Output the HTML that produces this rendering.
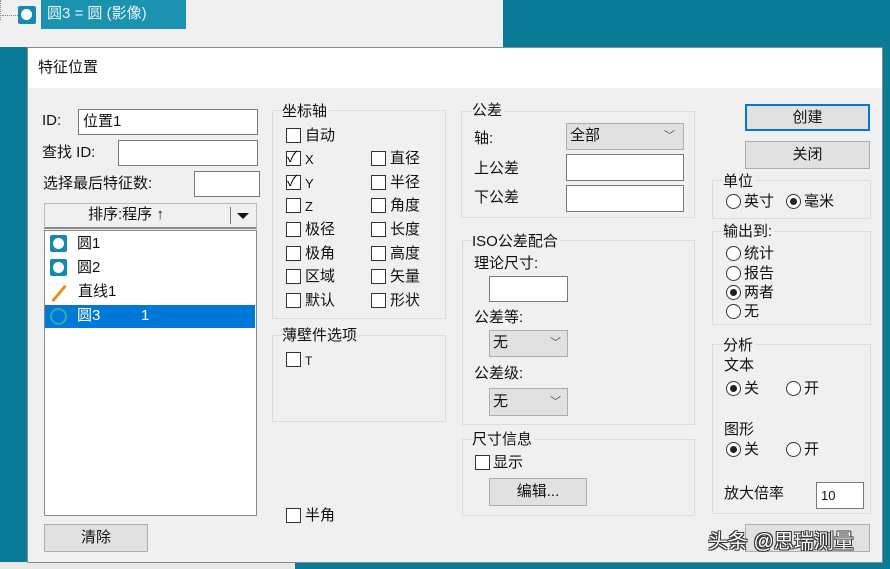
<!DOCTYPE html>
<html><head><meta charset="utf-8"><style>
*{margin:0;padding:0;box-sizing:border-box}
body{width:890px;height:569px;overflow:hidden;position:relative;background:#0a7b97;font-family:"Liberation Sans","Noto Sans CJK SC",sans-serif;font-size:15px;color:#111}
.a{position:absolute}
.t{position:absolute;line-height:18px;white-space:nowrap}
.in{position:absolute;background:#fff;border:1px solid #7a7a7a}
.grp{position:absolute;border:1px solid #dcdcdc}
.gl{position:absolute;background:#f0f0f0;line-height:18px;padding-right:2px;white-space:nowrap}
.cb{position:absolute;width:15px;height:15px;border:1px solid #333;background:#fff}
.rb{position:absolute;width:15px;height:15px;border:1px solid #333;border-radius:50%;background:#fff}
.rb.on::after{content:"";position:absolute;left:3px;top:3px;width:7px;height:7px;border-radius:50%;background:#222}
.btn{position:absolute;background:#e1e1e1;border:1px solid #adadad;text-align:center}
.sel{position:absolute;background:#e1e1e1;border:1px solid #adadad}
.ic{position:absolute;width:17px;height:17px;background:#1689b3;border-radius:2px}
.ic::after{content:"";position:absolute;left:3px;top:3px;width:11px;height:11px;border-radius:50%;background:#fff}
</style></head><body>
<div class="a" style="left:0;top:0;width:503px;height:47px;background:#f0f0f0"></div>
<div class="a" style="left:0;top:0;width:2px;height:20px;border-left:1px dotted #888"></div>
<div class="a" style="left:2px;top:15px;width:16px;border-top:1px dotted #888"></div>
<div class="ic" style="left:18px;top:6px;width:18px;height:18px"></div>
<div class="a" style="left:41px;top:0;width:145px;height:29px;background:#1a92b0"></div>
<div class="t" style="left:47px;top:5px;color:#e8f6fb;font-size:15px">圆3 = 圆 (影像)</div>
<div class="a" style="left:0;top:562px;width:295px;height:7px;background:#e8e8e8"></div>

<div class="a" style="left:27px;top:47px;width:856px;height:516px;background:#f0f0f0;border:1px solid #8a8a8a"></div>
<div class="a" style="left:28px;top:48px;width:854px;height:40px;background:#fff"></div>
<div class="t" style="left:38px;top:59px">特征位置</div>

<div class="t" style="left:42px;top:112px">ID:</div>
<div class="in" style="left:78px;top:109px;width:180px;height:26px"></div>
<div class="t" style="left:83px;top:113px">位置1</div>
<div class="t" style="left:42px;top:144px">查找 ID:</div>
<div class="in" style="left:118px;top:140px;width:140px;height:26px"></div>
<div class="t" style="left:43px;top:175px">选择最后特征数:</div>
<div class="in" style="left:194px;top:171px;width:66px;height:26px"></div>

<div class="a" style="left:44px;top:203px;width:213px;height:26px;background:#f0f0f0;border:1px solid #bbb;border-bottom:2px solid #888"></div>
<div class="t" style="left:88px;top:206px">排序:程序 ↑</div>
<div class="a" style="left:230px;top:207px;width:1px;height:17px;background:#777"></div>
<div class="a" style="left:237px;top:213px;border-left:6px solid transparent;border-right:6px solid transparent;border-top:6px solid #111"></div>
<div class="in" style="left:44px;top:230px;width:213px;height:286px;border-color:#888"></div>
<div class="ic" style="left:50px;top:235px"></div><div class="t" style="left:77px;top:235px">圆1</div>
<div class="ic" style="left:50px;top:259px"></div><div class="t" style="left:77px;top:259px">圆2</div>
<div class="a" style="left:49px;top:292px;width:20px;height:3px;background:#e8901a;transform:rotate(-50deg)"></div><div class="t" style="left:78px;top:283px">直线1</div>
<div class="a" style="left:45px;top:305px;width:210px;height:23px;background:#0078d7"></div>
<div class="a" style="left:50px;top:308px;width:17px;height:17px;border:2px solid #3aa;border-radius:50%"></div>
<div class="t" style="left:77px;top:307px;color:#fff">圆3</div><div class="t" style="left:141px;top:307px;color:#fff">1</div>
<div class="btn" style="left:44px;top:524px;width:104px;height:28px;line-height:26px">清除</div>

<div class="grp" style="left:272px;top:110px;width:174px;height:209px"></div>
<div class="gl" style="left:282px;top:103px">坐标轴</div>
<div class="cb" style="left:286px;top:128px"></div><div class="t" style="left:305px;top:127px">自动</div>
<div class="cb" style="left:286px;top:151px"></div><div class="t" style="left:305px;top:151px;font-size:13px">X</div>
<div class="cb" style="left:286px;top:175px"></div><div class="t" style="left:305px;top:175px;font-size:13px">Y</div>
<div class="t" style="left:287px;top:149px;font-size:15px">✓</div><div class="t" style="left:287px;top:173px;font-size:15px">✓</div>
<div class="cb" style="left:286px;top:198px"></div><div class="t" style="left:305px;top:198px;font-size:13px">Z</div>
<div class="cb" style="left:286px;top:222px"></div><div class="t" style="left:305px;top:221px">极径</div>
<div class="cb" style="left:286px;top:246px"></div><div class="t" style="left:305px;top:245px">极角</div>
<div class="cb" style="left:286px;top:269px"></div><div class="t" style="left:305px;top:268px">区域</div>
<div class="cb" style="left:286px;top:293px"></div><div class="t" style="left:305px;top:292px">默认</div>
<div class="cb" style="left:371px;top:151px"></div><div class="t" style="left:390px;top:150px">直径</div>
<div class="cb" style="left:371px;top:175px"></div><div class="t" style="left:390px;top:174px">半径</div>
<div class="cb" style="left:371px;top:198px"></div><div class="t" style="left:390px;top:197px">角度</div>
<div class="cb" style="left:371px;top:222px"></div><div class="t" style="left:390px;top:221px">长度</div>
<div class="cb" style="left:371px;top:246px"></div><div class="t" style="left:390px;top:245px">高度</div>
<div class="cb" style="left:371px;top:269px"></div><div class="t" style="left:390px;top:268px">矢量</div>
<div class="cb" style="left:371px;top:293px"></div><div class="t" style="left:390px;top:292px">形状</div>

<div class="grp" style="left:272px;top:335px;width:174px;height:87px"></div>
<div class="gl" style="left:282px;top:327px">薄壁件选项</div>
<div class="cb" style="left:286px;top:352px"></div><div class="t" style="left:305px;top:352px;font-size:12px">T</div>
<div class="cb" style="left:286px;top:508px"></div><div class="t" style="left:305px;top:507px">半角</div>

<div class="grp" style="left:461px;top:111px;width:234px;height:107px"></div>
<div class="gl" style="left:472px;top:102px">公差</div>
<div class="t" style="left:474px;top:130px">轴:</div>
<div class="sel" style="left:566px;top:123px;width:118px;height:27px"></div>
<div class="t" style="left:570px;top:127px">全部</div><div class="t" style="left:664px;top:127px;font-size:11px;color:#555">﹀</div>
<div class="t" style="left:474px;top:160px">上公差</div>
<div class="in" style="left:566px;top:154px;width:118px;height:27px"></div>
<div class="t" style="left:474px;top:189px">下公差</div>
<div class="in" style="left:566px;top:185px;width:118px;height:27px"></div>

<div class="grp" style="left:462px;top:240px;width:233px;height:185px"></div>
<div class="gl" style="left:472px;top:233px">ISO公差配合</div>
<div class="t" style="left:474px;top:255px">理论尺寸:</div>
<div class="in" style="left:489px;top:276px;width:79px;height:26px"></div>
<div class="t" style="left:474px;top:309px">公差等:</div>
<div class="sel" style="left:489px;top:330px;width:79px;height:27px"></div><div class="t" style="left:493px;top:334px">无</div><div class="t" style="left:550px;top:334px;font-size:11px;color:#555">﹀</div>
<div class="t" style="left:474px;top:365px">公差级:</div>
<div class="sel" style="left:489px;top:388px;width:79px;height:28px"></div><div class="t" style="left:493px;top:393px">无</div><div class="t" style="left:550px;top:393px;font-size:11px;color:#555">﹀</div>

<div class="grp" style="left:462px;top:439px;width:233px;height:77px"></div>
<div class="gl" style="left:472px;top:431px">尺寸信息</div>
<div class="cb" style="left:475px;top:455px"></div><div class="t" style="left:493px;top:454px">显示</div>
<div class="btn" style="left:489px;top:478px;width:98px;height:28px;line-height:26px">编辑...</div>

<div class="btn" style="left:745px;top:104px;width:125px;height:27px;line-height:23px;border:2px solid #0078d7">创建</div>
<div class="btn" style="left:745px;top:141px;width:125px;height:28px;line-height:26px">关闭</div>

<div class="grp" style="left:712px;top:180px;width:159px;height:39px"></div>
<div class="gl" style="left:723px;top:173px">单位</div>
<div class="rb" style="left:726px;top:194px"></div><div class="t" style="left:744px;top:193px">英寸</div>
<div class="rb on" style="left:786px;top:194px"></div><div class="t" style="left:804px;top:193px">毫米</div>

<div class="grp" style="left:712px;top:231px;width:159px;height:94px"></div>
<div class="gl" style="left:723px;top:223px">输出到:</div>
<div class="rb" style="left:726px;top:246px"></div><div class="t" style="left:744px;top:245px">统计</div>
<div class="rb" style="left:726px;top:266px"></div><div class="t" style="left:744px;top:265px">报告</div>
<div class="rb on" style="left:726px;top:285px"></div><div class="t" style="left:744px;top:284px">两者</div>
<div class="rb" style="left:726px;top:304px"></div><div class="t" style="left:744px;top:303px">无</div>

<div class="grp" style="left:712px;top:344px;width:159px;height:170px"></div>
<div class="gl" style="left:723px;top:337px">分析</div>
<div class="t" style="left:724px;top:357px">文本</div>
<div class="rb on" style="left:726px;top:381px"></div><div class="t" style="left:744px;top:380px">关</div>
<div class="rb" style="left:786px;top:381px"></div><div class="t" style="left:804px;top:380px">开</div>
<div class="t" style="left:724px;top:421px">图形</div>
<div class="rb on" style="left:726px;top:442px"></div><div class="t" style="left:744px;top:441px">关</div>
<div class="rb" style="left:786px;top:442px"></div><div class="t" style="left:804px;top:441px">开</div>
<div class="t" style="left:724px;top:485px">放大倍率</div>
<div class="in" style="left:816px;top:482px;width:48px;height:27px"></div><div class="t" style="left:821px;top:487px;font-size:13px">10</div>

<div class="btn" style="left:745px;top:524px;width:125px;height:28px"></div>
<div class="t" style="left:708px;top:530px;font-size:20px;line-height:24px;color:#fff;text-shadow:1px 1px 0 #333,-1px -1px 0 #333,1px -1px 0 #333,-1px 1px 0 #333">头条 @思瑞测量</div>
</body></html>
